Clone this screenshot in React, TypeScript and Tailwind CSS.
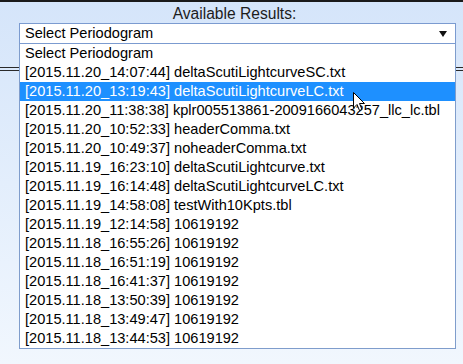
const results = [
  "[2015.11.20_14:07:44] deltaScutiLightcurveSC.txt",
  "[2015.11.20_13:19:43] deltaScutiLightcurveLC.txt",
  "[2015.11.20_11:38:38] kplr005513861-2009166043257_llc_lc.tbl",
  "[2015.11.20_10:52:33] headerComma.txt",
  "[2015.11.20_10:49:37] noheaderComma.txt",
  "[2015.11.19_16:23:10] deltaScutiLightcurve.txt",
  "[2015.11.19_16:14:48] deltaScutiLightcurveLC.txt",
  "[2015.11.19_14:58:08] testWith10Kpts.tbl",
  "[2015.11.19_12:14:58] 10619192",
  "[2015.11.18_16:55:26] 10619192",
  "[2015.11.18_16:51:19] 10619192",
  "[2015.11.18_16:41:37] 10619192",
  "[2015.11.18_13:50:39] 10619192",
  "[2015.11.18_13:49:47] 10619192",
  "[2015.11.18_13:44:53] 10619192",
];

const hovered = 1;

function Cursor() {
  return (
    <svg
      className="absolute left-[353px] top-[90px]"
      width="13"
      height="20"
      viewBox="0 0 13 20"
    >
      <path
        d="M0.5 0.5 L0.5 16 L4 12.5 L6.5 18.5 L9 17.5 L6.5 11.5 L11.5 11.5 Z"
        fill="#fff"
        stroke="#000"
        strokeWidth="1"
        strokeLinejoin="round"
      />
    </svg>
  );
}

export default function App() {
  return (
    <div
      className="relative h-[364px] w-[463px] overflow-hidden border-t-2 border-[#1a1a1a] bg-gradient-to-b from-[#d5e5fa] to-[#f1f7fe] text-[14.6px] text-black"
      style={{ fontFamily: '"Liberation Sans", Arial, sans-serif' }}
    >
      <div className="flex h-[21px] items-center justify-center pt-[3px] pl-[6px] text-[15.6px] leading-none text-[#1c1c1c]">
        Available Results:
      </div>

      {/* background table lines behind the open list */}
      <div className="mt-[44px] flex flex-col gap-[2px]">
        <div className="h-px bg-[#2a2a2a]" />
        <div className="h-px bg-[#2a2a2a]" />
      </div>

      <div className="absolute left-[19px] top-[21px] w-[437px]">
        <div className="flex h-[21px] items-center justify-between border border-[#7b9bd0] bg-white pl-[5px] pr-[8px] leading-none">
          <span>Select Periodogram</span>
          <svg width="8" height="6" viewBox="0 0 8 6">
            <path d="M0 0 H8 L4 6 Z" fill="#111" />
          </svg>
        </div>
        <ul className="border border-t-0 border-[#7f9dcc] bg-white">
          <li className="flex h-[19px] items-center pl-[5px] leading-none">
            Select Periodogram
          </li>
          {results.map((r, i) => (
            <li
              key={r}
              className={
                i === hovered
                  ? "flex h-[19px] items-center bg-[#1e90ff] pl-[5px] leading-none text-white"
                  : "flex h-[19px] items-center pl-[5px] leading-none"
              }
            >
              {r}
            </li>
          ))}
        </ul>
      </div>

      <Cursor />
    </div>
  );
}
